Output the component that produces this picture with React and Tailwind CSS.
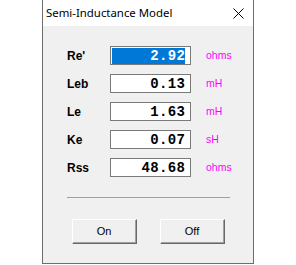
export default function App() {
  const rows = [
    { label: "Re'", value: "2.92", unit: "ohms", selected: true },
    { label: "Leb", value: "0.13", unit: "mH" },
    { label: "Le", value: "1.63", unit: "mH" },
    { label: "Ke", value: "0.07", unit: "sH" },
    { label: "Rss", value: "48.68", unit: "ohms" },
  ];
  return (
    <div className="w-[296px] h-[265px] bg-white relative overflow-hidden">
      <div className="ml-[42px] w-[212px] h-[264px] border-x border-b border-[#6e6e6e] flex flex-col">
        <div className="h-[26px] bg-white flex items-center justify-between pl-[3px] pr-[9px]">
          <span
            className="text-[11.4px] text-black leading-none mt-[-1px]"
            style={{ fontFamily: '"Noto Sans", "Open Sans", sans-serif' }}
          >
            Semi-Inductance Model
          </span>
          <svg width="11" height="11" viewBox="0 0 11 11" className="mt-[1px]">
            <path d="M0.5 0.5 L10.5 10.5 M10.5 0.5 L0.5 10.5" stroke="#000" strokeWidth="1" />
          </svg>
        </div>
        <div className="flex-1 bg-[#f0f0f0] flex flex-col pt-[20px] pl-[24px]">
          <div className="flex flex-col gap-[9px]">
            {rows.map((r) => (
              <div key={r.label} className="flex items-center h-[19px]">
                <div
                  className="w-[43px] text-[12px] font-bold text-black leading-none"
                  style={{ fontFamily: '"Liberation Sans", Arial, sans-serif' }}
                >
                  {r.label}
                </div>
                <div className="w-[81px] h-[19px] border border-[#7a7a7a] bg-white flex items-start">
                  {r.selected ? (
                    <div className="ml-[1px] mt-[1px] w-[73px] h-[16px] bg-[#0078d7] flex items-center justify-end">
                      <span
                        className="text-[14px] font-bold text-white leading-none tracking-[0.35px] mr-[-0.35px]"
                        style={{ fontFamily: '"Liberation Mono", monospace' }}
                      >
                        {r.value}
                      </span>
                    </div>
                  ) : (
                    <div className="w-full h-full flex items-center justify-end pr-[5px]">
                      <span
                        className="text-[14px] font-bold text-black leading-none tracking-[0.35px] mr-[-0.35px]"
                        style={{ fontFamily: '"Liberation Mono", monospace' }}
                      >
                        {r.value}
                      </span>
                    </div>
                  )}
                </div>
                <div
                  className="ml-[15px] text-[10.5px] text-[#ff00ff] leading-none"
                  style={{ fontFamily: '"Liberation Sans", Arial, sans-serif' }}
                >
                  {r.unit}
                </div>
              </div>
            ))}
          </div>
          <div className="mt-[20px] w-[163px] h-[1px] bg-[#a0a0a0]" />
          <div className="mt-[21px] flex gap-[23px] pl-[5px]">
            {["On", "Off"].map((b) => (
              <div
                key={b}
                className="w-[65px] h-[25px] bg-[#f0f0f0] border-t border-l border-white border-r border-b border-r-[#696969] border-b-[#696969] flex"
              >
                <div className="flex-1 border-r border-b border-[#a0a0a0] flex items-center justify-center">
                  <span
                    className="text-[11px] text-black leading-none"
                    style={{ fontFamily: '"Liberation Sans", Arial, sans-serif' }}
                  >
                    {b}
                  </span>
                </div>
              </div>
            ))}
          </div>
        </div>
      </div>
    </div>
  );
}
